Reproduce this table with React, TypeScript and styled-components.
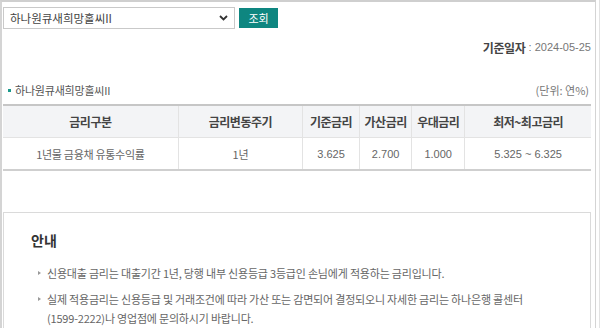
import React from 'react';
import styled, { createGlobalStyle } from 'styled-components';

const GlobalStyle = createGlobalStyle`
  html, body {
    margin: 0;
    padding: 0;
    background: #fff;
  }
  body {
    font-family: "Noto Sans CJK KR", "Noto Sans", sans-serif;
    color: #555;
  }
`;

const Viewport = styled.div`
  width: 600px;
  height: 328px;
  overflow: hidden;
  box-sizing: border-box;
  border-right: 1px solid #e2e2e2;
`;

const Frame = styled.div`
  width: 596px;
  min-height: 340px;
  box-sizing: border-box;
  border-top: 2px solid #cfcfcf;
  border-left: 2px solid #d4d4d4;
  border-right: 1px solid #d4d4d4;
  padding: 5px 4px 0 1px;
`;

const SearchBar = styled.div`
  display: flex;
  align-items: center;
  gap: 4px;
  height: 22px;
`;

const SelectBox = styled.div`
  width: 232px;
  height: 22px;
  box-sizing: border-box;
  border: 1px solid #c9c9c9;
  display: flex;
  align-items: center;
  justify-content: space-between;
  padding: 0 6px 0 6px;
  font-size: 11.5px;
  color: #444;
`;

const SearchButton = styled.button`
  width: 39px;
  height: 20px;
  border: 0;
  padding: 0;
  background: #0e8680;
  color: #fff;
  font-family: inherit;
  font-size: 11px;
`;

const DateLine = styled.div`
  margin-top: 11px;
  height: 14px;
  display: flex;
  justify-content: flex-end;
  align-items: center;
  gap: 3px;
`;

const DateLabel = styled.span`
  font-size: 12px;
  font-weight: 700;
  color: #444;
  letter-spacing: -0.3px;
`;

const DateValue = styled.span`
  font-family: "Liberation Sans", Arial, sans-serif;
  font-size: 11px;
  color: #777;
`;

const TitleRow = styled.div`
  margin-top: 28px;
  height: 16px;
  display: flex;
  justify-content: space-between;
  align-items: center;
  font-size: 11px;
`;

const ProductTitle = styled.div`
  display: flex;
  align-items: center;
  gap: 4px;
  padding-left: 5px;
  color: #555;
  letter-spacing: -0.2px;
`;

const Dot = styled.span`
  width: 3px;
  height: 3px;
  background: #1a9a8c;
`;

const Unit = styled.span`
  color: #777;
  padding-right: 2px;
`;

const RateTable = styled.table`
  margin-top: 6px;
  width: 100%;
  border-collapse: collapse;
  table-layout: fixed;
  border-top: 2px solid #c6c6c6;
  border-bottom: 2px solid #cfcfcf;
`;

const HeadCell = styled.th`
  height: 31px;
  padding: 0;
  background: #f3f4f6;
  border-bottom: 1px solid #e3e3e3;
  border-left: 1px solid #e3e3e3;
  font-size: 12px;
  font-weight: 700;
  color: #444;
  letter-spacing: -0.5px;
  &:first-child { border-left: 0; }
`;

const BodyCell = styled.td<{ $mono?: boolean }>`
  height: 31px;
  padding: 0;
  text-align: center;
  border-left: 1px solid #e3e3e3;
  font-size: 11px;
  color: #666;
  font-family: ${p => (p.$mono ? '"Liberation Sans", Arial, sans-serif' : 'inherit')};
  letter-spacing: ${p => (p.$mono ? '0' : '-0.3px')};
  &:first-child { border-left: 0; }
`;

const NoticeBox = styled.div`
  margin-top: 41px;
  border: 1px solid #dadada;
  padding: 19px 24px 0 27px;
  height: 140px;
`;

const NoticeTitle = styled.h3`
  margin: 0;
  font-size: 14px;
  font-weight: 700;
  color: #333;
  line-height: 16px;
`;

const NoticeList = styled.ul`
  list-style: none;
  margin: 16px 0 0;
  padding: 0;
  display: flex;
  flex-direction: column;
  gap: 7px;
`;

const NoticeItem = styled.li`
  position: relative;
  padding-left: 16px;
  font-size: 11px;
  line-height: 19px;
  color: #666;
  letter-spacing: -0.2px;
  word-break: keep-all;
  &::before {
    content: '';
    position: absolute;
    left: 7px;
    top: 7px;
    border-left: 3px solid #999;
    border-top: 2.5px solid transparent;
    border-bottom: 2.5px solid transparent;
  }
`;

const NoBreak = styled.span`
  white-space: nowrap;
`;

const columns = [
  { label: '금리구분', width: 175, value: '1년물 금융채 유통수익률', mono: false },
  { label: '금리변동주기', width: 124, value: '1년', mono: false },
  { label: '기준금리', width: 57, value: '3.625', mono: true },
  { label: '가산금리', width: 52, value: '2.700', mono: true },
  { label: '우대금리', width: 53, value: '1.000', mono: true },
  { label: '최저~최고금리', width: 126, value: '5.325 ~ 6.325', mono: true },
];

const Chevron = () => (
  <svg width="9" height="6" viewBox="0 0 9 6">
    <path d="M1 1l3.5 3.5L8 1" fill="none" stroke="#333" strokeWidth="1.8" />
  </svg>
);

const App: React.FC = () => (
  <>
    <GlobalStyle />
    <Viewport>
      <Frame>
        <SearchBar>
          <SelectBox>
            <span>하나원큐새희망홀씨II</span>
            <Chevron />
          </SelectBox>
          <SearchButton>조회</SearchButton>
        </SearchBar>
        <DateLine>
          <DateLabel>기준일자</DateLabel>
          <DateValue>: 2024-05-25</DateValue>
        </DateLine>
        <TitleRow>
          <ProductTitle><Dot />하나원큐새희망홀씨II</ProductTitle>
          <Unit>(단위: 연%)</Unit>
        </TitleRow>
        <RateTable>
          <colgroup>
            {columns.map(c => <col key={c.label} style={{ width: c.width }} />)}
          </colgroup>
          <thead>
            <tr>
              {columns.map(c => <HeadCell key={c.label}>{c.label}</HeadCell>)}
            </tr>
          </thead>
          <tbody>
            <tr>
              {columns.map(c => <BodyCell key={c.label} $mono={c.mono}>{c.value}</BodyCell>)}
            </tr>
          </tbody>
        </RateTable>
        <NoticeBox>
          <NoticeTitle>안내</NoticeTitle>
          <NoticeList>
            <NoticeItem>
              신용대출 금리는 대출기간 1년, 당행 내부 신용등급 3등급인 손님에게 적용하는 금리입니다.
            </NoticeItem>
            <NoticeItem>
              실제 적용금리는 신용등급 및 거래조건에 따라 가산 또는 감면되어 결정되오니 자세한 금리는 하나은행 콜센터{' '}
              <NoBreak>(1599-2222)나</NoBreak> 영업점에 문의하시기 바랍니다.
            </NoticeItem>
          </NoticeList>
        </NoticeBox>
      </Frame>
    </Viewport>
  </>
);

export default App;
